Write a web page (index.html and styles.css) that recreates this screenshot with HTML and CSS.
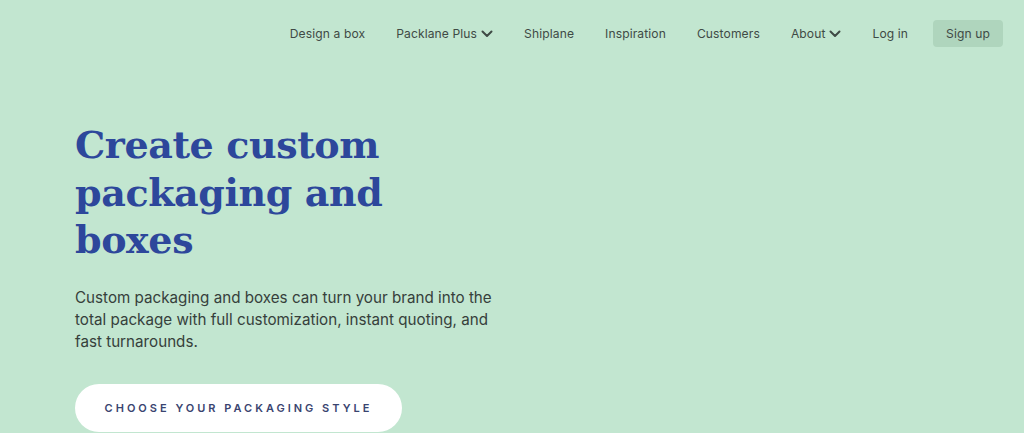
FILE: index.html
```html
<!DOCTYPE html>
<html lang="en">
<head>
<meta charset="utf-8">
<title>Packlane</title>
<link rel="stylesheet" href="styles.css">
</head>
<body>
<header class="nav">
  <a class="nav-link" href="#">Design a box</a>
  <a class="nav-link" href="#">Packlane Plus <svg class="chev" viewBox="0 0 12 8" width="12" height="8"><path d="M1.5 1.5 L6 6 L10.5 1.5" fill="none" stroke="currentColor" stroke-width="2" stroke-linecap="round" stroke-linejoin="round"/></svg></a>
  <a class="nav-link" href="#">Shiplane</a>
  <a class="nav-link" href="#">Inspiration</a>
  <a class="nav-link" href="#">Customers</a>
  <a class="nav-link" href="#">About <svg class="chev" viewBox="0 0 12 8" width="12" height="8"><path d="M1.5 1.5 L6 6 L10.5 1.5" fill="none" stroke="currentColor" stroke-width="2" stroke-linecap="round" stroke-linejoin="round"/></svg></a>
  <a class="nav-link" href="#">Log in</a>
  <a class="nav-link signup" href="#">Sign up</a>
</header>
<main class="hero">
  <h1 class="title">Create custom packaging and boxes</h1>
  <p class="lead">Custom packaging and boxes can turn your brand into the total package with full customization, instant quoting, and fast turnarounds.</p>
  <a class="cta" href="#">CHOOSE YOUR PACKAGING STYLE</a>
</main>
</body>
</html>
```
FILE: styles.css
```css
html, body {
  margin: 0;
  padding: 0;
  height: 100%;
}
body {
  background: #c2e6d0;
  font-family: "Inter", "Noto Sans", sans-serif;
  overflow: hidden;
}
.nav {
  display: flex;
  justify-content: flex-end;
  align-items: center;
  gap: 31px;
  padding: 19px 21px 0 0;
  height: 28px;
}
.nav-link {
  display: flex;
  align-items: center;
  gap: 4px;
  color: #3f4a45;
  font-size: 12.1px;
  text-decoration: none;
  letter-spacing: 0.1px;
  padding-top: 1px;
}
.chev {
  margin-top: 1px;
}
.signup {
  background: #afd5bd;
  border-radius: 4px;
  height: 27px;
  padding: 0 13px;
  margin-left: -6px;
}
.hero {
  padding: 0 0 0 75px;
}
.title {
  margin: 74px 0 0 0;
  width: 340px;
  font-family: "DejaVu Serif", "Liberation Serif", serif;
  font-weight: 700;
  font-size: 38px;
  line-height: 47.5px;
  letter-spacing: -0.4px;
  color: #2d479b;
}
.lead {
  margin: 23px 0 0 0;
  width: 432px;
  font-size: 15.2px;
  line-height: 22px;
  color: #36403b;
}
.cta {
  display: inline-flex;
  align-items: center;
  justify-content: center;
  margin-top: 31px;
  width: 327px;
  height: 48px;
  border-radius: 24px;
  background: #ffffff;
  color: #3a4470;
  font-size: 11px;
  font-weight: 600;
  letter-spacing: 3px;
  text-decoration: none;
}
```
